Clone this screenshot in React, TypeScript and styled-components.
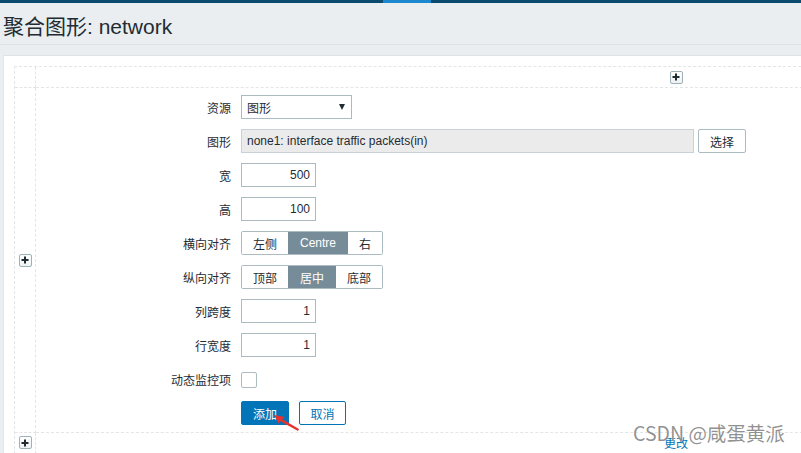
import React from "react";
import styled, { createGlobalStyle, css } from "styled-components";

const Global = createGlobalStyle`
  html, body { margin: 0; padding: 0; }
  body {
    background: #ebeef0;
    font-family: "Liberation Sans", Arial, "Noto Sans CJK SC", sans-serif;
    font-size: 12px;
    color: #1f2c33;
    overflow: hidden;
    width: 801px;
    height: 453px;
  }
  * { box-sizing: border-box; }
`;

const Page = styled.div`
  position: relative;
  width: 801px;
  height: 453px;
  overflow: hidden;
`;

const TopBar = styled.div`
  height: 3px;
  background: #0b4a6f;
  display: flex;
`;

const TopBarActive = styled.div`
  width: 48px;
  margin-left: 383px;
  background: #1c88cf;
`;

const Header = styled.div`
  height: 42px;
  padding: 11px 3px 0;
  border-bottom: 1px solid #dde3e6;
`;

const Title = styled.h1`
  margin: 0;
  font-weight: normal;
  font-size: 21px;
  line-height: 26px;
  color: #1f2c33;
  font-family: "Liberation Sans", Arial, "Noto Sans CJK SC", sans-serif;
`;

const Panel = styled.div`
  margin: 10px 0 0 3px;
  background: #fff;
  border-top: 1px solid #dde3e6;
  border-left: 1px solid #e4e8ea;
  padding: 10px 0 0 10px;
  height: 400px;
`;

const DashGrid = styled.div`
  display: grid;
  grid-template-columns: 21px 1281px;
  grid-template-rows: 21px 345px 21px;
  border-top: 1px dashed #e3e6e8;
  border-left: 1px dashed #e3e6e8;
`;

const Cell = styled.div<{ $center?: boolean; $top?: boolean }>`
  border-right: 1px dashed #e3e6e8;
  border-bottom: 1px dashed #e3e6e8;
  display: flex;
  ${(p) =>
    p.$center &&
    css`
      align-items: center;
      justify-content: center;
    `}
  ${(p) =>
    p.$top &&
    css`
      align-items: flex-start;
      justify-content: center;
      padding-top: 3px;
    `}
`;

const PlusButton = styled.button`
  width: 13px;
  height: 13px;
  padding: 0;
  border: 1px solid #9fb0b8;
  border-radius: 2px;
  background: linear-gradient(#ffffff, #eef1f3);
  position: relative;
  cursor: pointer;
  &::before,
  &::after {
    content: "";
    position: absolute;
    background: #1f2c33;
    left: 50%;
    top: 50%;
    transform: translate(-50%, -50%);
  }
  &::before { width: 7px; height: 2px; }
  &::after { width: 2px; height: 7px; }
`;

const Form = styled.div`
  display: grid;
  grid-template-columns: 195px auto;
  column-gap: 10px;
  row-gap: 10px;
  grid-auto-rows: 24px;
  padding: 7px 0;
  align-content: start;
  width: 100%;
`;

const Label = styled.label`
  display: flex;
  align-items: center;
  justify-content: flex-end;
  font-size: 12px;
  color: #1f2c33;
  white-space: nowrap;
  font-family: "Liberation Sans", Arial, "Noto Sans CJK SC", sans-serif;
`;

const Field = styled.div`
  display: flex;
  align-items: center;
  gap: 4px;
`;

const TextBox = styled.div<{ $w: number; $right?: boolean; $disabled?: boolean }>`
  width: ${(p) => p.$w}px;
  height: 24px;
  border: 1px solid #acbbc2;
  background: ${(p) => (p.$disabled ? "#ebebeb" : "#fff")};
  border-color: ${(p) => (p.$disabled ? "#c8d1d5" : "#acbbc2")};
  display: flex;
  align-items: center;
  justify-content: ${(p) => (p.$right ? "flex-end" : "flex-start")};
  padding: 0 5px;
  font-size: 12px;
  color: #1f2c33;
  white-space: nowrap;
`;

const SelectBox = styled.div`
  width: 111px;
  height: 24px;
  border: 1px solid #acbbc2;
  background: #fff;
  display: flex;
  align-items: center;
  justify-content: space-between;
  padding: 0 6px 0 5px;
  font-size: 12px;
`;

const Caret = styled.span`
  width: 0;
  height: 0;
  border-left: 3.5px solid transparent;
  border-right: 3.5px solid transparent;
  border-top: 6px solid #1f2c33;
`;

const GrayButton = styled.button`
  width: 48px;
  height: 24px;
  border: 1px solid #acbbc2;
  border-radius: 2px;
  background: #fff;
  color: #1f2c33;
  font-size: 12px;
  font-family: "Liberation Sans", Arial, "Noto Sans CJK SC", sans-serif;
  padding: 0;
`;

const Segmented = styled.div`
  display: flex;
  height: 24px;
  border: 1px solid #acbbc2;
  border-radius: 2px;
  overflow: hidden;
`;

const Segment = styled.span<{ $w: number; $on?: boolean }>`
  width: ${(p) => p.$w}px;
  display: flex;
  align-items: center;
  justify-content: center;
  font-size: 12px;
  background: ${(p) => (p.$on ? "#768d99" : "#fff")};
  color: ${(p) => (p.$on ? "#fff" : "#1f2c33")};
`;

const CheckBox = styled.span`
  width: 16px;
  height: 16px;
  border: 1px solid #acbbc2;
  border-radius: 2px;
  background: #fff;
  margin-top: 2px;
`;

const Actions = styled.div`
  display: flex;
  gap: 10px;
`;

const ActionButton = styled.button<{ $primary?: boolean }>`
  height: 24px;
  width: ${(p) => (p.$primary ? 48 : 47)}px;
  border-radius: 2px;
  border: 1px solid #0275b8;
  background: ${(p) => (p.$primary ? "#0275b8" : "#fff")};
  color: ${(p) => (p.$primary ? "#fff" : "#0275b8")};
  font-size: 12px;
  font-family: "Liberation Sans", Arial, "Noto Sans CJK SC", sans-serif;
  padding: 0;
`;

const ChangeLink = styled.a`
  color: #0275b8;
  font-size: 12px;
  line-height: 14px;
  margin-top: 1px;
  text-decoration: none;
  font-family: "Liberation Sans", Arial, "Noto Sans CJK SC", sans-serif;
`;

const Watermark = styled.div`
  position: absolute;
  left: 633px;
  top: 420px;
  font-size: 19.5px;
  line-height: 26px;
  color: rgba(115, 115, 115, 0.78);
  text-shadow: 0 0 1px rgba(255, 255, 255, 0.9);
  font-family: "Noto Sans CJK SC", "Liberation Sans", sans-serif;
  pointer-events: none;
  white-space: nowrap;
`;

const Arrow = styled.svg`
  position: absolute;
  left: 268px;
  top: 408px;
  pointer-events: none;
`;

const Spacer = styled.div``;

export default function App() {
  return (
    <Page>
      <Global />
      <TopBar>
        <TopBarActive />
      </TopBar>
      <Header>
        <Title>聚合图形: network</Title>
      </Header>
      <Panel>
        <DashGrid>
          <Cell />
          <Cell $center>
            <PlusButton aria-label="add column" />
          </Cell>
          <Cell $center>
            <PlusButton aria-label="add row" />
          </Cell>
          <Cell>
            <Form>
              <Label>资源</Label>
              <Field>
                <SelectBox>
                  <span>图形</span>
                  <Caret />
                </SelectBox>
              </Field>

              <Label>图形</Label>
              <Field>
                <TextBox $w={453} $disabled>
                  none1: interface traffic packets(in)
                </TextBox>
                <GrayButton>选择</GrayButton>
              </Field>

              <Label>宽</Label>
              <Field>
                <TextBox $w={75} $right>500</TextBox>
              </Field>

              <Label>高</Label>
              <Field>
                <TextBox $w={75} $right>100</TextBox>
              </Field>

              <Label>横向对齐</Label>
              <Field>
                <Segmented>
                  <Segment $w={46}>左侧</Segment>
                  <Segment $w={60} $on>Centre</Segment>
                  <Segment $w={34}>右</Segment>
                </Segmented>
              </Field>

              <Label>纵向对齐</Label>
              <Field>
                <Segmented>
                  <Segment $w={46}>顶部</Segment>
                  <Segment $w={48} $on>居中</Segment>
                  <Segment $w={46}>底部</Segment>
                </Segmented>
              </Field>

              <Label>列跨度</Label>
              <Field>
                <TextBox $w={75} $right>1</TextBox>
              </Field>

              <Label>行宽度</Label>
              <Field>
                <TextBox $w={75} $right>1</TextBox>
              </Field>

              <Label>动态监控项</Label>
              <Field>
                <CheckBox />
              </Field>

              <Spacer />
              <Actions>
                <ActionButton $primary>添加</ActionButton>
                <ActionButton>取消</ActionButton>
              </Actions>
            </Form>
          </Cell>
          <Cell $top>
            <PlusButton aria-label="add row" />
          </Cell>
          <Cell $top>
            <ChangeLink>更改</ChangeLink>
          </Cell>
        </DashGrid>
      </Panel>
      <Watermark>CSDN @咸蛋黄派</Watermark>
      <Arrow width="36" height="26" viewBox="0 0 36 26">
        <polygon points="6,7 17,9 14,11 31,21 30,23 12,13 11,16" fill="#e8322b" />
      </Arrow>
    </Page>
  );
}
